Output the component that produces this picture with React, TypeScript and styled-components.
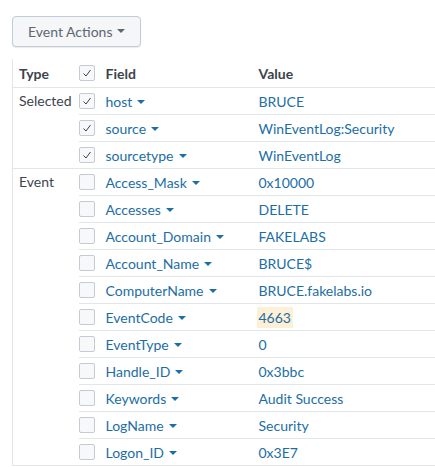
import React from 'react';
import styled, {createGlobalStyle} from 'styled-components';

const LINK = '#1c6ea5';
const TEXT = '#3c444d';
const LINE = '#e1e6eb';

const GlobalStyle = createGlobalStyle`
	html, body {
		margin: 0;
		padding: 0;
		background: #ffffff;
		overflow: hidden;
	}
	body {
		font-family: Lato, "Open Sans", "Liberation Sans", sans-serif;
		font-size: 14px;
		color: ${TEXT};
	}
`;

const Page = styled.div`
	padding-left: 12px;
	width: 460px;
`;

const ActionButton = styled.button`
	display: inline-flex;
	align-items: center;
	margin-top: 16px;
	height: 31px;
	padding: 0 15px;
	border: 1px solid #c3cbd4;
	border-radius: 4px;
	background: #f4f6f7;
	color: #5c6773;
	font-family: inherit;
	font-size: 14px;
	box-shadow: 0 1px 1px rgba(0, 0, 0, 0.08);
`;

const Caret = styled.span<{color?: string}>`
	display: inline-block;
	width: 0;
	height: 0;
	border-left: 4px solid transparent;
	border-right: 4px solid transparent;
	border-top: 4.5px solid ${(props) => props.color ?? '#5c6773'};
	margin-left: 5px;
	vertical-align: middle;
	position: relative;
	top: -1px;
`;

const Table = styled.table`
	margin-top: 12px;
	border-collapse: collapse;
	border-left: 1px solid ${LINE};
	width: 440px;
	table-layout: fixed;

	th {
		height: 28px;
		text-align: left;
		font-weight: 700;
		color: ${TEXT};
		border-bottom: 1px solid ${LINE};
		padding: 0;
		vertical-align: middle;
	}
	td {
		height: 26px;
		padding: 0;
		vertical-align: middle;
	}
`;

const TypeCell = styled.td`
	padding-left: 6px !important;
	vertical-align: top !important;
	line-height: 26px;
	border-bottom: 1px solid ${LINE};
`;

const Cell = styled.td`
	border-bottom: 1px solid ${LINE};
`;

const FieldLink = styled.span`
	color: ${LINK};
	white-space: nowrap;
`;

const Value = styled.span<{highlight?: boolean}>`
	color: ${LINK};
	white-space: nowrap;
	padding: 2px 2px;
	margin-left: -2px;
	background: ${(props) => (props.highlight ? '#fdf0d6' : 'transparent')};
`;

const Box = styled.span`
	display: flex;
	align-items: center;
	justify-content: center;
	box-sizing: border-box;
	width: 16px;
	height: 16px;
	border: 1px solid #c3cbd4;
	border-radius: 2px;
	background: #f7f8fa;
`;

const CheckBox: React.FC<{checked?: boolean}> = ({checked}) => (
	<Box>
		{checked && (
			<svg width="10" height="10" viewBox="0 0 10 10">
				<polyline points="1.5,5.5 4,8 8.5,2" fill="none" stroke="#3c444d" strokeWidth="1" />
			</svg>
		)}
	</Box>
);

type Row = {field: string; value: string; highlight?: boolean};

const groups: {type: string; checked: boolean; rows: Row[]}[] = [
	{
		type: 'Selected',
		checked: true,
		rows: [
			{field: 'host', value: 'BRUCE'},
			{field: 'source', value: 'WinEventLog:Security'},
			{field: 'sourcetype', value: 'WinEventLog'},
		],
	},
	{
		type: 'Event',
		checked: false,
		rows: [
			{field: 'Access_Mask', value: '0x10000'},
			{field: 'Accesses', value: 'DELETE'},
			{field: 'Account_Domain', value: 'FAKELABS'},
			{field: 'Account_Name', value: 'BRUCE$'},
			{field: 'ComputerName', value: 'BRUCE.fakelabs.io'},
			{field: 'EventCode', value: '4663', highlight: true},
			{field: 'EventType', value: '0'},
			{field: 'Handle_ID', value: '0x3bbc'},
			{field: 'Keywords', value: 'Audit Success'},
			{field: 'LogName', value: 'Security'},
			{field: 'Logon_ID', value: '0x3E7'},
		],
	},
];

export default function App() {
	return (
		<Page>
			<GlobalStyle />
			<ActionButton>
				Event Actions
				<Caret />
			</ActionButton>
			<Table>
				<colgroup>
					<col style={{width: 66}} />
					<col style={{width: 27}} />
					<col style={{width: 153}} />
					<col />
				</colgroup>
				<thead>
					<tr>
						<th style={{paddingLeft: 6}}>Type</th>
						<th>
							<CheckBox checked />
						</th>
						<th>Field</th>
						<th>Value</th>
					</tr>
				</thead>
				<tbody>
					{groups.map((group) =>
						group.rows.map((row, index) => (
							<tr key={group.type + row.field}>
								{index === 0 && <TypeCell rowSpan={group.rows.length}>{group.type}</TypeCell>}
								<Cell>
									<CheckBox checked={group.checked} />
								</Cell>
								<Cell>
									<FieldLink>
										{row.field}
										<Caret color={LINK} />
									</FieldLink>
								</Cell>
								<Cell>
									<Value highlight={row.highlight}>{row.value}</Value>
								</Cell>
							</tr>
						))
					)}
				</tbody>
			</Table>
		</Page>
	);
}
